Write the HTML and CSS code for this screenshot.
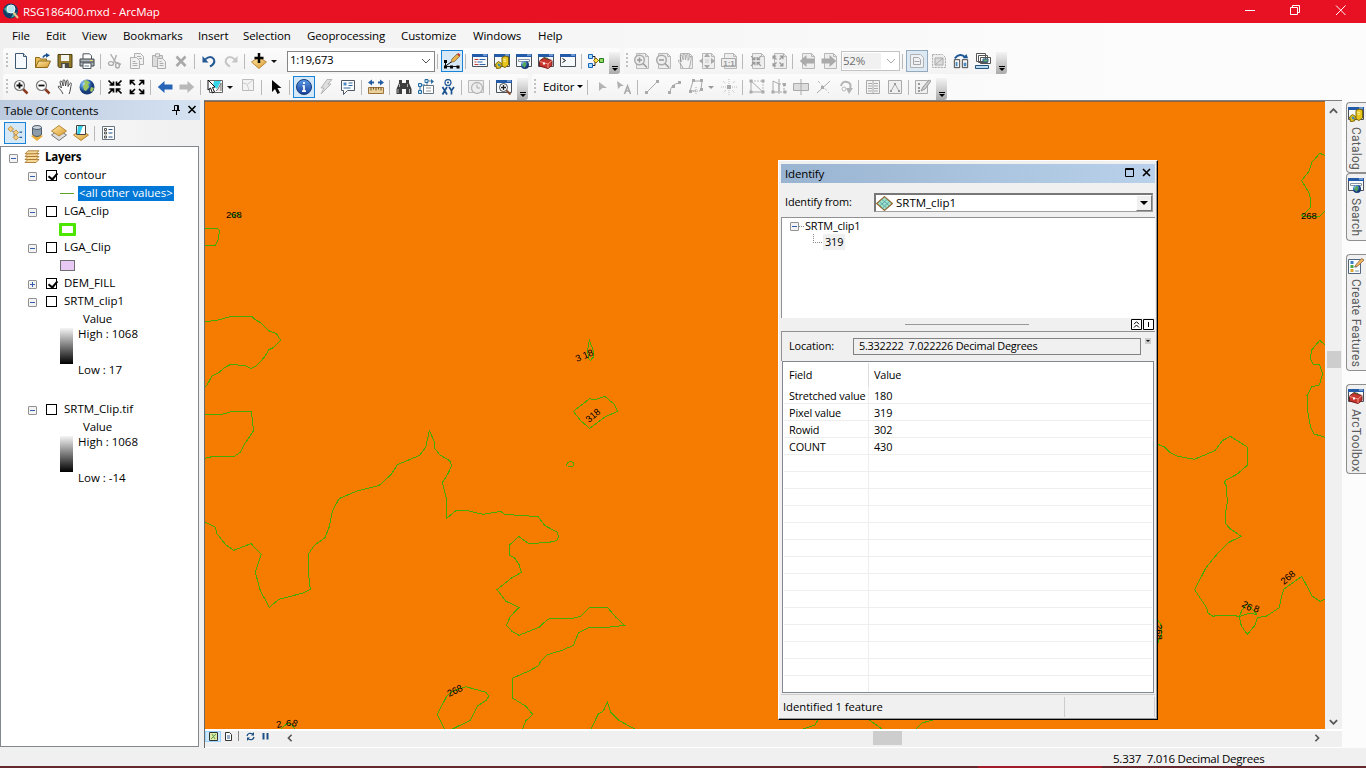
FILE: index.html
```html
<!DOCTYPE html>
<html lang="en">
<head>
<meta charset="utf-8">
<title>RSG186400.mxd - ArcMap</title>
<link rel="stylesheet" href="styles.css">
</head>
<body>
<svg class="sprite" aria-hidden="true">
<defs>
<linearGradient id="gold" x2="1" y2="1"><stop offset="0" stop-color="#ffe9a8"/><stop offset="1" stop-color="#d99a2b"/></linearGradient>
<linearGradient id="blue" x2="0" y2="1"><stop offset="0" stop-color="#5c9be8"/><stop offset="1" stop-color="#163f9a"/></linearGradient>
<radialGradient id="earth" cx=".35" cy=".3"><stop offset="0" stop-color="#bfe4ff"/><stop offset=".6" stop-color="#3f7fd0"/><stop offset="1" stop-color="#173a78"/></radialGradient>
</defs>
<symbol id="new" viewBox="0 0 16 16"><path d="M2.5.5h8l3 3v12h-11z" fill="#f6fafd" stroke="#3f5872"/><path d="M10.500.5v3h3" fill="#cfdfec" stroke="#3f5872"/></symbol>
<symbol id="open" viewBox="0 0 16 16"><path d="M.5 14.500v-10h4l1 1.500h6v2" fill="#e9bd56" stroke="#8d6a1b"/><path d="M.5 14.500l3-6.500h12l-3 6.500z" fill="url(#gold)" stroke="#8d6a1b"/><path d="M8 4.500q1-2.500 4-2.500" fill="none" stroke="#174f94" stroke-width="1.600"/><path d="M11 0l4 2.200-4 2.500z" fill="#174f94"/></symbol>
<symbol id="save" viewBox="0 0 16 16"><path d="M1 1.500h14v13H2.500L1 13.500z" fill="#92792b" stroke="#4b4015"/><path d="M4 2h8v6H4z" fill="#f3f3ef"/><path d="M4 10h8v5H4z" fill="#4d4a43"/><path d="M5.500 11h2.300v4H5.500z" fill="#eee"/></symbol>
<symbol id="print" viewBox="0 0 16 16"><path d="M4 6V.8h6.500l2 2V6" fill="#fff" stroke="#4b5560"/><path d="M1 6h14v7H1z" fill="#afb5b8" stroke="#3f464c"/><path d="M1 9h14" stroke="#3e4449"/><path d="M4 10h8v5.500H4z" fill="#fff" stroke="#4b5560"/><path d="M5.500 13h4.500" stroke="#5a7688"/><path d="M11 7.500h2.500" stroke="#f6d95c"/></symbol>
<symbol id="cut" viewBox="0 0 16 16"><g fill="none" stroke="#aeaeae" stroke-width="1.400"><path d="M3.500 1l5.500 9M9.500 2L6.500 10"/><ellipse cx="4" cy="10.500" rx="2.500" ry="1.900"/><ellipse cx="10.500" cy="12.500" rx="1.900" ry="2.500"/><path d="M9 9.500l5 2" stroke-width="1.800"/></g></symbol>
<symbol id="copy" viewBox="0 0 16 16"><g fill="#f1f1f1" stroke="#b0b0b0"><path d="M5.500.5h6l3 3v8h-9z"/><path d="M1.500 4.500h6l3 3v8h-9z"/><path d="M3.500 8.500h3m-3 2h5m-5 2h5M8 3.500h4m-2 2h3"/></g></symbol>
<symbol id="paste" viewBox="0 0 16 16"><g fill="#efefef" stroke="#adadad"><path d="M1.500 2.500h10v11h-10z" fill="#ddd"/><path d="M4.500.8h4v3h-4z"/><path d="M6.500 5.500h5l3 3v7h-8z"/><path d="M8.500 8.500h2m-2 2h4m-4 2h4"/></g></symbol>
<symbol id="del" viewBox="0 0 16 16"><path d="M3.500 3.500l9 9.500m0-9.500l-9 9.500" stroke="#a9a9a9" stroke-width="2.600"/></symbol>
<symbol id="undo" viewBox="0 0 16 16"><path d="M4 6.500q6-5 9 0q1.500 4-4 7" fill="none" stroke="#245993" stroke-width="2"/><path d="M1.500 3v6.500h6z" fill="#245993"/></symbol>
<symbol id="redo" viewBox="0 0 16 16"><path d="M12 6.500q-6-5-9 0q-1.500 4 4 7" fill="none" stroke="#c6c6c6" stroke-width="2"/><path d="M14.500 3v6.500h-6z" fill="#c6c6c6"/></symbol>
<symbol id="add" viewBox="0 0 16 16"><path d="M8 4l7.500 5L8 15.500.5 9z" fill="url(#gold)" stroke="#b98a3d"/><path d="M8 0v10M3.500 5h9" stroke="#050505" stroke-width="2.500"/></symbol>
<symbol id="edit" viewBox="0 0 18 16"><path d="M2.500 8.500v5h7l6 0M2.500 13L9 8.500" fill="none" stroke="#111"/><path d="M1 7h3v3H1zM1 12.500h3v3H1zM7 12.500h3v3H7zM13.500 12.500h3v3h-3z"/><path d="M8 9l1-3 5-5 2.500 2.500-5 5z" fill="#e8b34c" stroke="#76542c" stroke-width=".7"/><path d="M14 1l2.500 2.500 1-1.500L15.500 0z" fill="#c53a32"/></symbol>
<symbol id="win" viewBox="0 0 16 16"><path d="M.5 1.500h15v12H.5z" fill="#f6fafc" stroke="#4b5158"/><path d="M0 1h16v3H0z" fill="#235ba9"/><path d="M11 2h4" stroke="#b8d3f2"/></symbol>
<symbol id="toc" viewBox="0 0 16 16"><use href="#win"/><path d="M2.500 6.500h4m-4 2.500h2m-2 2.500h4" stroke="#c23b34"/><path d="M7.500 6.500h6m-8 2.500h5m-3 2.500h6" stroke="#3264a8"/></symbol>
<symbol id="catalog" viewBox="0 0 16 16"><use href="#win"/><path d="M8 4.500l3-1.500 3.500 1v8L11 14.500 8 13z" fill="#e8c51d" stroke="#7c6706"/><path d="M9 6l3 .5M9.500 8l2.500.4" stroke="#fff099"/><path d="M1.500 11l3-2.500 3 2-1 4.500-4 .5z" fill="#e8c51d" stroke="#7c6706"/><path d="M4 11l2 2" stroke="#338ac4" stroke-width="2"/></symbol>
<symbol id="search" viewBox="0 0 16 16"><use href="#win"/><path d="M2.500 6.500h11v2h-11z" fill="#fff" stroke="#8694a3"/><circle cx="9" cy="12" r="4" fill="url(#earth)"/><path d="M8 9q3 0 2 3t-2 3q0-2-2-3z" fill="#58a856"/></symbol>
<symbol id="toolbox" viewBox="0 0 16 16"><use href="#win"/><path d="M1.500 8l4-3 8.500 2.500v5L10 15.500 1.500 13z" fill="#c7372f" stroke="#761b18"/><path d="M1.500 8.500l8.500 2.500 4-3.500M10 11v4" fill="none" stroke="#f19b8e"/><path d="M6 6V4.500l4 1V7" fill="none" stroke="#552"/><path d="M5 9.500h2v2H5z" fill="#fff"/></symbol>
<symbol id="python" viewBox="0 0 16 16"><use href="#win"/><path d="M2.500 5.500l3 2-3 2" fill="none" stroke="#111"/></symbol>
<symbol id="model" viewBox="0 0 16 16"><path d="M4 3.500h3v4h5M4 12.500h3v-4" fill="none" stroke="#222"/><path d="M.5 1.500h4v4h-4zM.5 10.500h4v4h-4z" fill="#a9dfff" stroke="#1b63b6"/><path d="M8 5l2.500 2.500L8 10 5.500 7.500z" fill="#ffe04c" stroke="#8b6a00"/><path d="M11.500 5.500h4v4h-4z" fill="#90db65" stroke="#2c7a20"/></symbol>
<symbol id="page" viewBox="0 0 16 16"><path d="M3.500.5h9l3 3v12h-12z" fill="#eee" stroke="#b8b8b8"/><path d="M12.500.5v3h3" fill="none" stroke="#b8b8b8"/></symbol>
<symbol id="pzin" viewBox="0 0 16 16"><use href="#page"/><circle cx="6.500" cy="7" r="4.800" fill="#eee" stroke="#aaa" stroke-width="1.500"/><path d="M4 7h5M6.500 4.500v5M10 10.500l4 4" stroke="#999" stroke-width="1.500"/></symbol>
<symbol id="pzout" viewBox="0 0 16 16"><use href="#page"/><circle cx="6.500" cy="7" r="4.800" fill="#eee" stroke="#aaa" stroke-width="1.500"/><path d="M4 7h5M10 10.500l4 4" stroke="#999" stroke-width="1.500"/></symbol>
<symbol id="hand" viewBox="0 0 16 16"><path d="M6 15C5 12 2 9.500 1.200 8c0-1.500 1.800-1 3.300 1L3 3.200c0-1.700 1.500-1.500 2 0L6.200 7 6 1.800c.3-1.500 1.600-1.300 1.900 0L8.500 7l1-5c.4-1.300 1.700-1 1.600.4L11 7.500l1.800-3c.8-1.200 1.900-.5 1.500.8C13.500 8 13.500 12 12 15" fill="#fff" stroke="#4b4b4b"/></symbol>
<symbol id="phand" viewBox="0 0 16 16"><use href="#page"/><use href="#hand" opacity=".4"/></symbol>
<symbol id="pfull" viewBox="0 0 16 16"><use href="#page"/><path d="M8 0l3 4H5zm0 16l3-4H5zM0 8l4-3v6zm16 0l-4-3v6z" fill="#aaa"/><path d="M6 6h4v4H6z" fill="#ddd"/></symbol>
<symbol id="inward" viewBox="0 0 16 16"><path d="M1.500 1.500L6 6M2.500 6h4V2.500M14.500 1.500L10 6m3.500 0h-4V2.500M1.500 14.500L6 10m-3.500 0h4v3.500m8 1L10 10m3.500 0h-4v3.500" fill="none" stroke="currentColor" stroke-width="1.700"/></symbol>
<symbol id="outward" viewBox="0 0 16 16"><path d="M6 6L1.500 1.500m0 4v-4h4M10 6l4.500-4.500m-4 0h4v4M6 10l-4.500 4.500m0-4v4h4M10 10l4.500 4.500m-4 0h4v-4" fill="none" stroke="currentColor" stroke-width="1.700"/></symbol>
<symbol id="pin1" viewBox="0 0 16 16"><use href="#page"/><use href="#inward" color="#999" x="1" y="2" width="12" height="12"/></symbol>
<symbol id="pout" viewBox="0 0 16 16"><use href="#page"/><use href="#outward" color="#999" x="1" y="2" width="12" height="12"/></symbol>
<symbol id="left" viewBox="0 0 16 16"><path d="M.8 8L7.500 2v3.500h8v5h-8V14z" fill="currentColor"/></symbol>
<symbol id="right" viewBox="0 0 16 16"><path d="M15.200 8L8.500 2v3.500h-8v5h8V14z" fill="currentColor"/></symbol>
<symbol id="pleft" viewBox="0 0 16 16"><use href="#page"/><use href="#left" color="#aaa"/></symbol>
<symbol id="pright" viewBox="0 0 16 16"><use href="#page"/><use href="#right" color="#aaa"/></symbol>
<symbol id="draft" viewBox="0 0 16 16"><path d="M1.500 1.500h10l3 3v10h-13z" fill="#eef2f5" stroke="#aeb2b5"/><path d="M4.500 4.500h5l2 2v5h-7zM5.500 8.500h5" fill="none" stroke="#a7a7a7"/></symbol>
<symbol id="focus" viewBox="0 0 16 16"><path d="M1.500 1.500h10l3 3v10h-13z" fill="#eee" stroke="#aaa" stroke-dasharray="2 1"/><path d="M4 5h8v7H4zm0 7l8-7" fill="#ddd" stroke="#aaa"/></symbol>
<symbol id="layout" viewBox="0 0 18 16"><path d="M2 5Q8-2 14 4" fill="none" stroke="#1c5796" stroke-width="2.200"/><path d="M11 5h6l-2-5z" fill="#1c5796"/><path d="M1.500 6.500h6v9h-6zM10.500 6.500h6v9h-6z" fill="#f6f6f6" stroke="#333"/><path d="M3 9h2v5H3zM12 10h3v4h-3z" fill="#4a8ac2"/></symbol>
<symbol id="ddp" viewBox="0 0 16 16"><path d="M1.500.5h9v8h-9zM3.500 2.500h9v7h-9zM5.500 4.500h10v6h-10z" fill="#fff" stroke="#555"/><path d="M8 6h5v3H8z" fill="#65a96a" stroke="#315e8c"/><path d="M.5 12.500h13v3H.5z" fill="#b9dcf3" stroke="#26557c"/></symbol>
<symbol id="zin" viewBox="0 0 16 16"><path d="M10 10l4.500 4.500" stroke="#8b3a22" stroke-width="2.500"/><circle cx="6.500" cy="6.500" r="5" fill="#fff" stroke="#777" stroke-width="1.200"/><path d="M3.500 6.500h6m-3-3v6" stroke="#111" stroke-width="1.800"/></symbol>
<symbol id="zout" viewBox="0 0 16 16"><path d="M10 10l4.500 4.500" stroke="#8b3a22" stroke-width="2.500"/><circle cx="6.500" cy="6.500" r="5" fill="#fff" stroke="#777" stroke-width="1.200"/><path d="M3.500 6.500h6" stroke="#111" stroke-width="1.800"/></symbol>
<symbol id="globe" viewBox="0 0 16 16"><circle cx="8" cy="8" r="7.500" fill="url(#earth)"/><path d="M5 1q4 0 6 3l-2 1 1 3-3 4-2-1-1-4 2-2zM12 8l3 1-2 4-2-1z" fill="#9fc65a"/></symbol>
<symbol id="selfeat" viewBox="0 0 16 16"><path d="M2.500 1.500h13v12h-13z" fill="#fff" stroke="#666"/><path d="M7 2h7l-4 8-4-3z" fill="#36d5e9"/><path d="M9 12l2-2 3-6v8" fill="#edd" stroke="#777"/><path d="M1 1l7 7-2.500.5L7.500 13l-2 1-2-5L1 11z" fill="#fff" stroke="#111"/></symbol>
<symbol id="clear" viewBox="0 0 16 16"><path d="M2.500.5h11v11h-11z" fill="#f3f3f3" stroke="#bbb"/><path d="M3 4l4 1 2 6M8 5l5-4" fill="none" stroke="#ccc"/></symbol>
<symbol id="arrow" viewBox="0 0 16 16"><path d="M4 1v12l3-3 2.500 5 2.500-1.200-2.500-4.700h4z" fill="#080808"/></symbol>
<symbol id="info" viewBox="0 0 16 16"><circle cx="8" cy="8" r="7.500" fill="url(#blue)" stroke="#173c7c"/><path d="M8 3v2M6.500 7H8v5M6 12.200h4" fill="none" stroke="#fff" stroke-width="1.700"/></symbol>
<symbol id="flash" viewBox="0 0 16 16"><path d="M9 0.500h5l-4 4.500h3L3 15l3-6H3z" fill="#ddd" stroke="#b5b5b5"/></symbol>
<symbol id="popup" viewBox="0 0 16 16"><path d="M1.500 1.500h13v10h-7l-4 4v-4h-2z" fill="#fff" stroke="#4e5965"/><path d="M3.500 3.500h3v3h-3z" fill="#4d8dca"/><path d="M8.500 4h4m-4 2.500h4m-9 2.500h7" stroke="#2f659e"/></symbol>
<symbol id="measure" viewBox="0 0 16 16"><path d="M0 3.500l4-3v2h2v2H4v2zM16 3.500l-4-3v2h-2v2h2v2z" fill="#245da0"/><path d="M.5 8.500h15v6H.5z" fill="#ead19a" stroke="#9b723b"/><path d="M3 8.500v3m2.500-3v2m2.500-2v3m2.500-3v2m2.500-2v3" stroke="#6d4e25"/></symbol>
<symbol id="binoc" viewBox="0 0 16 16"><path d="M3 1h3v3h4V1h3v3l2.500 6v5H10v-5H6v5H.5v-5L3 4z" fill="#3d3d3d"/><path d="M2 10v4m1.500-9v3m8-3v3m2 2v4" stroke="#aaa"/></symbol>
<symbol id="route" viewBox="0 0 16 16"><path d="M5.500 6.500h10v8h-10zM9 6V2h4" fill="#fff" stroke="#66747f"/><path d="M2 13V6h5" fill="none" stroke="#2b73a8"/><path d="M.5 11.500h3v3h-3zM.5 4.500h3v3h-3zM7 .5h3v3H7z" fill="#bde2fa" stroke="#276b9d"/><path d="M13 0v5l3-2.500z" fill="#276b9d"/><path d="M8 9h5m-5 3h5" stroke="#999"/></symbol>
<symbol id="gotoxy" viewBox="0 0 16 16"><circle cx="8" cy="3.500" r="3" fill="#fff" stroke="#245b96" stroke-width="1.300"/><circle cx="8" cy="3.500" r="1.100" fill="#245b96"/><path d="M2.500 8l4.500 7.500M7 8l-4.500 7.500M9 8l2.500 3.500L14 8m-2.500 3v4.500" fill="none" stroke="#1b518c" stroke-width="1.700"/></symbol>
<symbol id="time" viewBox="0 0 16 16"><path d="M.5 1.500h15v12H.5z" fill="#eee" stroke="#bbb"/><circle cx="9" cy="9" r="5.500" fill="#eee" stroke="#b5b5b5" stroke-width="1.300"/><path d="M9 5.500V9h3" fill="none" stroke="#aaa"/></symbol>
<symbol id="viewer" viewBox="0 0 16 16"><use href="#win"/><path d="M10 11l4.500 4.500" stroke="#8b4a32" stroke-width="2"/><circle cx="7.500" cy="8.500" r="4" fill="#fff" stroke="#444"/><path d="M5 8.500h5M7.500 6v5" stroke="#222" stroke-width="1.300"/></symbol>
<symbol id="gray-arrow" viewBox="0 0 16 16"><path d="M5 3l8 6H8.500L5 12z" fill="#b4b4b4"/></symbol>
<symbol id="arrowa" viewBox="0 0 16 16"><path d="M1 2l7 5H5l-3 3z" fill="#b0b0b0"/><path d="M8.500 15l3-8 3 8m-5-3h4" fill="none" stroke="#aaa" stroke-width="1.600"/></symbol>
<symbol id="line" viewBox="0 0 16 16"><path d="M3 13L13 3" stroke="#aaa"/><path d="M1 12h3v3H1zM12 1h3v3h-3z" fill="#aaa"/></symbol>
<symbol id="arc" viewBox="0 0 16 16"><path d="M4 13q1-8 9-9" fill="none" stroke="#aaa"/><path d="M2 12h3v3H2zM6 6h3v3H6zM12 2h3v3h-3z" fill="#aaa"/></symbol>
<symbol id="trace" viewBox="0 0 16 16"><path d="M5 2h9l-1 8M5 2L2 12h6" fill="none" stroke="#aaa"/><path d="M4 0h3v3H4zM12 0h3v3h-3zM1 11h3v3H1zM12 9h3v3h-3z" fill="#aaa"/><path d="M8 8v7m-3-3h7" stroke="#aaa" stroke-dasharray="1 1"/></symbol>
<symbol id="point" viewBox="0 0 16 16"><path d="M8 0v5m0 6v5M0 8h5m6 0h5M2 2l3 3m6 6l3 3m0-12l-3 3m-6 6l-3 3" stroke="#bbb" stroke-dasharray="1 1"/><path d="M6 6h4v4H6z" fill="#aaa"/></symbol>
<symbol id="vertices" viewBox="0 0 16 16"><path d="M2 13V2l12 11z" fill="none" stroke="#aaa"/><path d="M2 2h12v11" fill="none" stroke="#bbb" stroke-dasharray="2 1"/><path d="M.5.5h3v3h-3zM.5 11.500h3v3h-3zM12.500 11.500h3v3h-3zM12.500.5h3v3h-3z" fill="#aaa"/></symbol>
<symbol id="reshape" viewBox="0 0 16 16"><path d="M2 13V2l6 3v8zM8 0v15" fill="none" stroke="#aaa"/><path d="M8 5h5v8H8" fill="none" stroke="#aaa" stroke-dasharray="2 1"/><path d="M.5 11.500h3v3h-3zM12.500 11.500h3v3h-3zM12 4h3v3h-3z" fill="#aaa"/></symbol>
<symbol id="cutpoly" viewBox="0 0 16 16"><path d="M.5 4.500h15v7H.5z" fill="#ddd" stroke="#aaa"/><path d="M8 0v16" stroke="#aaa"/></symbol>
<symbol id="split" viewBox="0 0 16 16"><path d="M2 14L15 2" stroke="#aaa"/><path d="M3 2l11 12" stroke="#bbb" stroke-dasharray="3 2"/><path d="M6 7h3v3H6z" fill="#aaa"/></symbol>
<symbol id="rotate" viewBox="0 0 16 16"><path d="M4 7q1-5 6-4t3 7" fill="none" stroke="#b4b4b4" stroke-width="2"/><path d="M9 9h7l-4 6z" fill="#b4b4b4"/><circle cx="7" cy="10" r="2" fill="none" stroke="#bbb"/></symbol>
<symbol id="attrs" viewBox="0 0 16 16"><path d="M1.500 1.500h13v13h-13zM8 2v12" fill="#f2f2f2" stroke="#aaa"/><path d="M3 4.500h4m2 0h4m-10 2.500h4m2 0h4m-10 2.500h4m2 0h4m-10 2.500h4m2 0h4" stroke="#aaa"/></symbol>
<symbol id="sketch" viewBox="0 0 16 16"><path d="M1.500 1.500h13v13h-13zM4 12l4-7 4 7" fill="#f0f0f0" stroke="#aaa"/><path d="M3 11h2v2H3zM7 4h2v2H7zM11 11h2v2h-2z" fill="#999"/></symbol>
<symbol id="create-gray" viewBox="0 0 16 16"><path d="M.5 1.500h12v13H.5z" fill="#f0f0f0" stroke="#aaa"/><path d="M3 4h2v2H3zM3 8h2v2H3zM3 11h2v2H3z" fill="#999"/><path d="M6 12l2-4 6-7 2 1-6 8z" fill="#ccc" stroke="#999"/></symbol>
<symbol id="create" viewBox="0 0 16 16"><path d="M.5 1.500h12v14H.5z" fill="#f8fbff" stroke="#52677d"/><path d="M2.500 3h3v3h-3z" fill="#3b7cc2"/><path d="M2.500 7h3v3h-3z" fill="#47a549"/><path d="M2.500 11h3v3h-3z" fill="#e1a531"/><path d="M7 13h4M7 9h2" stroke="#7b92a5"/><path d="M6.500 9l2-3 5-5.500L16 2l-6 6z" fill="#efb35b" stroke="#7e5637" stroke-width=".7"/></symbol>
<symbol id="layers" viewBox="0 0 16 14"><g fill="#f6d796" stroke="#a97b35" stroke-width=".9"><path d="M1 12.500l3-3h11l-3 3zM1 9.500l3-3h11l-3 3zM1 6.500l3-3h11l-3 3z"/><path d="M1 3.800l3-3h11l-3 3z"/></g></symbol>
<symbol id="drawlist" viewBox="0 0 18 16"><path d="M3 4l5 3v6h3M8 7l3 0" fill="none" stroke="#777"/><path d="M1 3.500L4 .5l3.500 3-3.500 3zM7 7.500l3-3 3 3-3 3zM7 13l3-3 3 3-3 3z" fill="#f2cd83" stroke="#c08b36"/><path d="M14 7h3m-3 6h3" stroke="#235b98" stroke-width="1.500"/></symbol>
<symbol id="source" viewBox="0 0 16 16"><path d="M2 11l6-3 6 3-6 5z" fill="#e9ae39"/><path d="M3.500 2.500v7q4.500 4 9 0v-7" fill="#8d9cab" stroke="#4b5b6b"/><ellipse cx="8" cy="2.500" rx="4.500" ry="2" fill="#ccd5dd" stroke="#4b5b6b"/></symbol>
<symbol id="visible" viewBox="0 0 16 16"><path d="M8 5l7.500 5L8 15.500.5 10z" fill="#ddd" stroke="#777"/><path d="M8 .5L15.500 6 8 11 .5 6z" fill="url(#gold)" stroke="#b88634"/></symbol>
<symbol id="bysel" viewBox="0 0 16 16"><path d="M8 5l7.500 5L8 15.500.5 10z" fill="url(#gold)" stroke="#b88634"/><path d="M3.500.5h9v9h-9z" fill="#fff" stroke="#444"/><path d="M5 1h5l-2 5-1 3H4z" fill="#36cce5"/></symbol>
<symbol id="options" viewBox="0 0 16 16"><path d="M1.500 1.500h12v13h-12z" fill="#fff" stroke="#65727f"/><path d="M3.500 3.500h2v2h-2zM3.500 7h2v2h-2zM3.500 11h2v2h-2z" fill="none" stroke="#555"/><path d="M7.500 4.500h4m-4 3.500h4m-4 4h4" stroke="#234f84"/></symbol>
<symbol id="grid" viewBox="0 0 18 16"><path d="M9 .7L17.300 8 9 15.300.7 8z" fill="#9fe1c9" stroke="#93672d" stroke-width="1.300"/><path d="M6 3.500l8 7M3.500 5.700l8 7.300M12 3.500l-8 7m10.500-5L6.700 13" stroke="#438fa0" stroke-width=".7"/></symbol>
</svg>

<header class="titlebar">
  <svg class="logo" viewBox="0 0 16 16"><circle cx="7.500" cy="8" r="7.500" fill="#123e6c"/><path d="M1 6l4-4 2 4-2 5zM10 11l4-2-2 4-4 2z" fill="#47a89a"/><path d="M10 9l5 6" stroke="#e6c48c" stroke-width="2"/><circle cx="8" cy="6" r="4" fill="#b8e4ef" stroke="#e9f4f7"/></svg>
  <span class="title">RSG186400.mxd - ArcMap</span>
  <svg class="winbtns" viewBox="0 0 110 23"><g fill="none" stroke="#fff"><path d="M5 10.500h10M50.500 7.500h7v7h-7zM52.500 7V5.500h7v7h-2M96 5.500l9.500 9.500m0-9.500L96 15"/></g></svg>
</header>

<nav class="menu"><span class="m1">File</span><span class="m2">Edit</span><span class="m3">View</span><span class="m4">Bookmarks</span><span class="m5">Insert</span><span class="m6">Selection</span><span class="m7">Geoprocessing</span><span class="m8">Customize</span><span class="m9">Windows</span><span>Help</span></nav>

<div class="bars">
  <div class="toolbar first"><i class="grip"></i>
    <b><svg><use href="#new"/></svg></b><b><svg><use href="#open"/></svg></b><b><svg><use href="#save"/></svg></b><b><svg><use href="#print"/></svg></b><i class="sep"></i>
    <b><svg><use href="#cut"/></svg></b><b><svg><use href="#copy"/></svg></b><b><svg><use href="#paste"/></svg></b><b><svg><use href="#del"/></svg></b><i class="sep"></i>
    <b><svg><use href="#undo"/></svg></b><b><svg><use href="#redo"/></svg></b><i class="sep"></i><b><svg><use href="#add"/></svg></b><i class="caret"></i>
    <div class="combo scale"><span>1:19,673</span><svg viewBox="0 0 10 6"><path d="M1 1l4 4 4-4" fill="none" stroke="#555"/></svg></div><i class="sep"></i>
    <b class="on"><svg><use href="#edit"/></svg></b><i class="sep"></i>
    <b><svg><use href="#toc"/></svg></b><b><svg><use href="#catalog"/></svg></b><b><svg><use href="#search"/></svg></b><b><svg><use href="#toolbox"/></svg></b><b><svg><use href="#python"/></svg></b><i class="sep"></i><b><svg><use href="#model"/></svg></b><i class="cap"></i>
  </div>
  <div class="toolbar"><i class="grip"></i>
    <b><svg><use href="#pzin"/></svg></b><b><svg><use href="#pzout"/></svg></b><b><svg><use href="#phand"/></svg></b><b><svg><use href="#pfull"/></svg></b><b><svg viewBox="0 0 16 16"><use href="#page"/><path d="M.5 5.500h14v8H.5z" fill="#eee" stroke="#aaa"/><text x="2.300" y="12.500" class="one">1:1</text></svg></b><i class="sep"></i>
    <b><svg><use href="#pin1"/></svg></b><b><svg><use href="#pout"/></svg></b><i class="sep"></i><b><svg><use href="#pleft"/></svg></b><b><svg><use href="#pright"/></svg></b>
    <div class="combo pct"><span>52%</span><svg viewBox="0 0 10 6"><path d="M1 1l4 4 4-4" fill="none" stroke="#aaa"/></svg></div><i class="sep"></i>
    <b class="on muted"><svg><use href="#draft"/></svg></b><b><svg><use href="#focus"/></svg></b><b><svg><use href="#layout"/></svg></b><b><svg><use href="#ddp"/></svg></b><i class="cap"></i>
  </div>
</div>
<div class="bars">
  <div class="toolbar first"><i class="grip"></i>
    <b><svg><use href="#zin"/></svg></b><b><svg><use href="#zout"/></svg></b><b><svg><use href="#hand"/></svg></b><b><svg><use href="#globe"/></svg></b><i class="sep"></i>
    <b><svg><use href="#inward"/></svg></b><b><svg><use href="#outward"/></svg></b><i class="sep"></i><b class="navy"><svg><use href="#left"/></svg></b><b class="gray"><svg><use href="#right"/></svg></b><i class="sep"></i>
    <b><svg><use href="#selfeat"/></svg></b><i class="caret"></i><b><svg><use href="#clear"/></svg></b><i class="sep"></i><b><svg><use href="#arrow"/></svg></b><i class="sep"></i>
    <b class="on"><svg><use href="#info"/></svg></b><b><svg><use href="#flash"/></svg></b><b><svg><use href="#popup"/></svg></b><i class="sep"></i><b><svg><use href="#measure"/></svg></b><i class="sep"></i>
    <b><svg><use href="#binoc"/></svg></b><b><svg><use href="#route"/></svg></b><b><svg><use href="#gotoxy"/></svg></b><i class="sep"></i><b><svg><use href="#time"/></svg></b><i class="sep"></i><b><svg><use href="#viewer"/></svg></b><i class="cap"></i>
  </div>
  <div class="toolbar"><i class="grip"></i><span class="editor">Editor</span><i class="sep"></i>
    <b><svg><use href="#gray-arrow"/></svg></b><b><svg><use href="#arrowa"/></svg></b><i class="sep"></i><b><svg><use href="#line"/></svg></b><b><svg><use href="#arc"/></svg></b><b><svg><use href="#trace"/></svg></b><i class="caret dim"></i><b><svg><use href="#point"/></svg></b><i class="sep"></i>
    <b><svg><use href="#vertices"/></svg></b><b><svg><use href="#reshape"/></svg></b><b><svg><use href="#cutpoly"/></svg></b><b><svg><use href="#split"/></svg></b><b><svg><use href="#rotate"/></svg></b><i class="sep"></i><b><svg><use href="#attrs"/></svg></b><b><svg><use href="#sketch"/></svg></b><i class="sep"></i><b><svg><use href="#create-gray"/></svg></b><i class="cap"></i>
  </div>
</div>

<main class="work">
  <aside class="contents">
    <div class="panel-title"><span>Table Of Contents</span><svg viewBox="0 0 30 12"><path d="M6.500 1.500h4v5h-4zM4 6.500h8M8.500 7v4" fill="none" stroke="#000"/><path d="M9.500 1v6" stroke="#000"/><path d="M20.500 2l7 7m0-7l-7 7" stroke="#000" stroke-width="1.600"/></svg></div>
    <div class="panel-tools"><b class="on"><svg><use href="#drawlist"/></svg></b><b><svg><use href="#source"/></svg></b><b><svg><use href="#visible"/></svg></b><b><svg><use href="#bysel"/></svg></b><i class="sep"></i><b><svg><use href="#options"/></svg></b></div>
    <div class="tree">
      <div class="row root"><i class="exp"></i><svg class="lay"><use href="#layers"/></svg><strong>Layers</strong></div>
      <div class="row"><i class="exp"></i><i class="check yes"></i><span>contour</span></div>
      <div class="row"><i class="sym-line"></i><span class="selected">&lt;all other values&gt;</span></div>
      <div class="row"><i class="exp"></i><i class="check"></i><span>LGA_clip</span></div>
      <div class="row"><i class="sym-green"></i></div>
      <div class="row"><i class="exp"></i><i class="check"></i><span>LGA_Clip</span></div>
      <div class="row"><i class="sym-lilac"></i></div>
      <div class="row"><i class="exp plus"></i><i class="check yes"></i><span>DEM_FILL</span></div>
      <div class="row"><i class="exp"></i><i class="check"></i><span>SRTM_clip1</span></div>
      <div class="row value">Value</div>
      <div class="ramp"><i></i><div><span>High : 1068</span><span>Low : 17</span></div></div>
      <div class="row"><i class="exp"></i><i class="check"></i><span>SRTM_Clip.tif</span></div>
      <div class="row value">Value</div>
      <div class="ramp"><i></i><div><span>High : 1068</span><span>Low : -14</span></div></div>
    </div>
  </aside>

  <section class="view">
    <div class="canvas-row">
      <svg class="map" viewBox="205 102 1120 627">
        <g class="contour">
          <g transform="translate(200 190) scale(.33333)">
            <path d="M15 115H50L59 121 56 137V147L46 166H15M15 395L50 391 95 379H155L165 389 182 398 209 424 229 430 242 451 222 472 207 479 192 503 169 527 153 536 135 526 90 524 72 534 55 549 36 558 20 587 15 590M15 674H62L95 665H155L157 694 161 722 135 760 121 787 101 800H36L15 805"/>
            <path d="M1168 451L1163 480 1165 505 1171 512 1181 500 1179 480zM1120 664L1169 626 1184 629 1214 619 1243 643 1253 664 1216 680 1169 715 1142 692zM1098 827L1104 817 1112 813 1120 818V827L1115 831 1104 829M92 68L100 82 112 68 122 82"/>
          </g>
          <g transform="translate(200 430) scale(.33333)">
            <path d="M15 276L46 291 50 310 76 343 101 361 153 341 184 373 166 427 181 482 208 532 236 508 310 489 331 478 326 435 325 373 343 346 375 323 388 290 397 244 417 206 471 183 538 166 574 133 592 104 659 76 677 52 688 2 703 35 704 55 719 74 749 92 755 107 743 133 727 158 739 206 740 265 769 241H797L850 253 902 244 914 253 1014 260 1035 287 1073 307 1075 321 1070 332 1047 337 986 341 956 319 928 346V375L943 383 957 403 964 427 936 443 891 479 918 514 957 532 931 560 919 586 936 604 957 616 1017 592 1043 568 1052 565H1118L1142 559 1169 532H1222L1248 562 1274 586 1222 592H1169L1136 608 1120 646 1089 660 1043 674 1021 695 1016 707 989 722 937 745V804L977 828 998 853 977 873 967 898"/>
            <path d="M734 898L712 853 740 799 756 785 797 770 858 787 866 799 860 810 833 828 811 871 755 898M1173 898L1194 853 1210 843 1222 817 1233 848 1256 871 1306 898M243 896L262 880 274 883 284 896"/>
          </g>
          <path d="M803 729L815 725 819 718M868 719L882 729M916 729L922 723 936 719"/>
          <g transform="translate(1150 0) scale(.33333)"><path d="M530 468L509 460 485 488 478 512 455 542 478 580 482 600V622L455 648 508 650 528 631M530 1039L509 1021 485 1050 481 1075 490 1093H508L518 1122 508 1155 485 1160 471 1187 474 1240 482 1282 492 1302 530 1313"/></g>
          <g transform="translate(1140 420) scale(.33333)"><path d="M50 72L72 80 92 99 110 108 163 118 225 92 247 62 271 49 322 81V136L292 162 258 180 253 187 259 198 262 248 256 280V310L270 326 304 349 268 366 233 400 198 443 164 509 200 563 204 579 219 589 233 586 285 587 298 590 304 618 322 643 345 616 352 593 380 588 418 563 423 537 431 508 485 469 517 529 540 544 558 536M298 590L306 570 322 550 345 577 350 583 327 580zM53 600L62 612 66 640 53 670"/></g>
        </g>
        <g class="labels">
          <text x="226" y="218">268</text><text x="1301" y="219">268</text>
          <text transform="translate(577 362) rotate(-22)">3 18</text>
          <text transform="translate(589 423) rotate(-40)">318</text>
          <text transform="translate(449 697) rotate(-25)">268</text>
          <text transform="translate(277 728) rotate(-12)">2</text><text x="286" y="726">6</text><text transform="translate(291 725) rotate(25)">8</text>
          <text transform="translate(1284 585) rotate(-40)">268</text>
          <text transform="translate(1241 606) rotate(30)">26</text><text transform="translate(1253 611) rotate(20)">8</text>
          <text transform="translate(1156 624) rotate(90)">268</text>
        </g>
      </svg>
      <div class="vscroll"><svg viewBox="0 0 10 6"><path d="M1 5l4-4 4 4" fill="none" stroke="#555" stroke-width="2"/></svg><i></i><svg viewBox="0 0 10 6"><path d="M1 1l4 4 4-4" fill="none" stroke="#555" stroke-width="2"/></svg></div>
    </div>
    <div class="hscroll">
      <span class="viewtab on"><svg viewBox="0 0 9 9"><path d="M.5.500h8v8h-8z" fill="#dceca5" stroke="#333"/><path d="M2 7l5-5M3 2l3 5" stroke="#5b9650"/></svg></span>
      <span class="viewtab"><svg viewBox="0 0 9 9"><path d="M1.500.5h4l2 2v6h-6z" fill="#fff" stroke="#333"/><path d="M3 4h3m-3 2h3" stroke="#2f609a"/></svg></span><i></i>
      <span class="viewtab refresh"><svg viewBox="0 0 9 9"><path d="M1 4q1-4 6-2M8 5q-1 4-6 2" fill="none" stroke="#1d4f84" stroke-width="1.300"/><path d="M8 0v3.500H5zM1 9V5.500h3z" fill="#1d4f84"/></svg></span>
      <span class="viewtab pause"><svg viewBox="0 0 9 9"><path d="M2.500 1v6.500M6.500 1v6.500" stroke="#1d4f84" stroke-width="2"/></svg></span>
      <svg class="hl" viewBox="0 0 6 10"><path d="M5 1L1 5l4 4" fill="none" stroke="#555" stroke-width="2"/></svg><em></em><svg class="hr" viewBox="0 0 6 10"><path d="M1 1l4 4-4 4" fill="none" stroke="#555" stroke-width="2"/></svg>
    </div>
  </section>

  <aside class="dock">
    <div class="tab t1"><svg><use href="#catalog"/></svg><span>Catalog</span></div>
    <div class="tab t2"><svg><use href="#search"/></svg><span>Search</span></div>
    <div class="tab t3"><svg><use href="#create"/></svg><span>Create Features</span></div>
    <div class="tab t4"><svg><use href="#toolbox"/></svg><span>ArcToolbox</span></div>
  </aside>
</main>
<footer class="status"><span>5.337&nbsp; 7.016 Decimal Degrees</span></footer>
<div class="edge"><i></i></div>

<section class="identify">
  <div class="id-title"><span>Identify</span><svg viewBox="0 0 28 12"><path d="M1.500 1.500h8v8h-8zM1 2.500h9" fill="none" stroke="#000"/><path d="M19 2l7 7m0-7l-7 7" stroke="#000" stroke-width="1.600"/></svg></div>
  <div class="from"><span>Identify from:</span><div class="select"><svg><use href="#grid"/></svg><span>SRTM_clip1</span><b></b></div></div>
  <div class="results"><div><i class="exp"></i><u></u><span>SRTM_clip1</span></div><div class="child"><u></u><span>319</span></div></div>
  <div class="splitter"><i></i><svg viewBox="0 0 23 11"><path d="M.5.500h10v10H.5zM12.500.5h10v10h-10z" fill="#fff" stroke="#000"/><path d="M3 5.200l2.500-2.500L8 5.200M3 8.500L5.500 6 8 8.500M17.500 3v5" fill="none" stroke="#000"/></svg></div>
  <div class="location"><span>Location:</span><div>5.332222&nbsp; 7.022226 Decimal Degrees</div><b></b></div>
  <div class="table">
    <div class="head"><span>Field</span><span>Value</span></div>
    <div><span>Stretched value</span><span>180</span></div><div><span>Pixel value</span><span>319</span></div><div><span>Rowid</span><span>302</span></div><div><span>COUNT</span><span>430</span></div>
    <div><span></span></div><div><span></span></div><div><span></span></div><div><span></span></div><div><span></span></div><div><span></span></div><div><span></span></div><div><span></span></div><div><span></span></div><div><span></span></div><div><span></span></div><div><span></span></div><div><span></span></div><div class="last"><span></span></div>
  </div>
  <div class="id-status"><span>Identified 1 feature</span><i></i></div>
</section>
</body>
</html>
```
FILE: styles.css
```css
* { box-sizing: border-box; }
body { margin: 0; width: 1366px; height: 768px; overflow: hidden; display: flex; flex-direction: column; position: relative; background: linear-gradient(90deg, #f0f0f0, #fcfcfc 85%); font: 11.5px/16px "Open Sans", "Noto Sans", sans-serif; color: #000; letter-spacing: -.1px; }
i, em { font-style: normal; display: block; flex: none; }
svg { display: block; flex: none; }
.sprite { position: absolute; width: 0; height: 0; }
.titlebar { height: 23px; flex: none; background: #e81123; color: #fff; display: flex; padding-left: 3px; }
.logo { width: 16px; height: 16px; margin-top: 3px; }
.title { margin: 4px 0 0 4px; flex: 1; white-space: nowrap; }
.winbtns { width: 110px; height: 23px; margin-right: 16px; }
.menu { height: 25px; flex: none; display: flex; padding: 5px 0 0 12px; white-space: nowrap; }
.menu span { flex: none; }
.m1 { width: 34px; } .m2 { width: 36px; } .m3 { width: 41px; } .m4 { width: 75px; } .m5 { width: 45px; }
.m6 { width: 64px; } .m7 { width: 94px; } .m8 { width: 72px; } .m9 { width: 65px; }

.bars { height: 26px; flex: none; display: flex; }
.toolbar { height: 26px; display: flex; align-items: center; background: linear-gradient(#fcfcfc, #f3f3f3); border-radius: 3px; margin-left: 4px; }
.toolbar.first { margin-left: 3px; }
.toolbar b, .panel-tools b { width: 22px; height: 22px; flex: none; display: flex; align-items: center; justify-content: center; font-weight: 400; }
.toolbar b svg, .panel-tools b svg { width: 16px; height: 16px; }
.toolbar b.on svg { width: 18px; height: 16px; }
.toolbar b.on, .panel-tools b.on { background: #d5e8f8; border: 1px solid #1883d7; }
.toolbar b.muted { background: #dce9f3; border-color: #93a9bd; }
.one { font: 700 8px "Liberation Sans", Arial, sans-serif; fill: #999; }
.navy { color: #2664b8; }
.gray { color: #b8b8b8; }
.grip { width: 2px; height: 16px; margin: 0 2px; background: repeating-linear-gradient(#c0c0c0 0 2px, transparent 2px 4px); }
.toolbar.first .grip { margin-left: 3px; }
.sep { width: 6px; height: 15px; background: linear-gradient(#b9b9b9, #b9b9b9) 2px 0 / 1px 100% no-repeat; }
.caret { width: 11px; height: 3px; }
.caret::after { content: ""; display: block; margin-left: 1px; width: 0; border: 3px solid transparent; border-top-color: #111; border-bottom: 0; }
.caret.dim::after { border-top-color: #999; }
.cap { width: 11px; height: 22px; margin: 4px 0 0 2px; background: linear-gradient(#f4f4f4, #aaa); border-radius: 0 0 3px 0; display: flex; flex-direction: column; justify-content: flex-end; align-items: center; padding-bottom: 3px; gap: 1px; }
.cap::before { content: ""; width: 6px; height: 1px; background: #000; }
.cap::after { content: ""; border: 3px solid transparent; border-top-color: #000; border-bottom: 0; }
.combo { display: flex; align-items: center; background: #fff; border: 1px solid #868686; height: 21px; }
.combo span { flex: 1; padding: 0 0 2px 2px; letter-spacing: -.25px; }
.combo svg { width: 10px; height: 6px; margin-right: 3px; }
.scale { width: 148px; margin-left: 6px; }
.pct { width: 59px; height: 20px; margin-left: 1px; color: #6d6d6d; border-color: #c3c3c3; }
.pct span { flex: none; width: 38px; background: #f1f1f1; margin: 0 5px 0 1px; padding: 0; }
.editor { width: 47px; padding-left: 5px; white-space: nowrap; }
.editor::after { content: ""; display: inline-block; border: 3px solid transparent; border-top-color: #000; border-bottom: 0; margin: 0 0 3px 3px; }

.work { flex: none; height: 648px; display: flex; }
.contents { width: 204px; flex: none; background: #f0f0f0; }
.panel-title { width: 200px; height: 20px; padding: 3px 2px 0 4px; display: flex; justify-content: space-between; background: linear-gradient(90deg, #bccbdf, #d5e2f2); letter-spacing: -.12px; }
.panel-title svg { width: 30px; height: 12px; margin-top: 1px; }
.panel-tools { height: 26px; display: flex; align-items: center; padding-left: 4px; width: 200px; background: linear-gradient(90deg, #fafafa, #f0f0f0); }
.tree { width: 199px; height: 601px; background: #fff; border: 1px solid #828790; padding-top: 1px; }
.row { height: 18px; display: flex; align-items: center; padding-left: 27px; }
.root { padding-left: 8px; }
.exp { width: 9px; height: 9px; border: 1px solid #919191; border-radius: 1px; background: linear-gradient(#365fb0, #365fb0) 1px 3px / 5px 1px no-repeat, #f3f3f3; margin-top: 2px; }
.exp.plus { background: linear-gradient(#365fb0, #365fb0) 1px 3px / 5px 1px no-repeat, linear-gradient(#365fb0, #365fb0) 3px 1px / 1px 5px no-repeat, #f3f3f3; }
.lay { width: 16px; height: 14px; margin: 0 5px 0 6px; }
.root strong { letter-spacing: -.25px; }
.check { width: 11px; height: 11px; border: 1px solid #000; margin: 1px 8px 0 9px; }
.row .check + span { margin-left: -1px; letter-spacing: 0; }
.check.yes::after { content: ""; display: block; width: 4px; height: 7px; border: solid #000; border-width: 0 2px 2px 0; transform: translate(3px, 0) rotate(40deg); }
.sym-line { width: 14px; height: 1px; background: #5da324; margin: 0 4px 0 32px; }
.selected { background: #0078d7; color: #fff; height: 15px; line-height: 14px; width: 96px; padding-left: 1px; white-space: nowrap; letter-spacing: -.05px; }
.sym-green { width: 17px; height: 13px; margin: 0 0 0 31px; border: 3px solid #4ce600; border-radius: 1px; }
.sym-lilac { width: 15px; height: 11px; margin-left: 32px; border: 1px solid #6e6e6e; background: #e8c8f5; }
.value { padding-left: 82px; }
.ramp { height: 72px; display: flex; padding-left: 59px; }
.ramp > i { width: 13px; height: 36px; background: linear-gradient(#f5f5f5, #000); }
.ramp > div { margin: -2px 0 0 5px; display: flex; flex-direction: column; gap: 20px; white-space: nowrap; letter-spacing: 0; }

.view { width: 1138px; height: 648px; background: #f0f0f0; border-top: 1px solid #808080; border-left: 1px solid #696969; flex: none; }
.canvas-row { height: 630px; display: flex; border-bottom: 2px solid #fff; }
.map { width: 1120px; height: 628px; background: #f57c00; border-top: 1px solid #8b6540; }
.contour { fill: none; stroke: #43ab00; }
.contour path { vector-effect: non-scaling-stroke; stroke-width: 1px; shape-rendering: crispEdges; }
.labels { font: 9.500px "Liberation Sans", Arial, sans-serif; letter-spacing: 0; }
.vscroll { width: 15px; margin-left: 1px; display: flex; flex-direction: column; align-items: center; padding: 7px 0 4px; }
.vscroll svg { width: 9px; height: 6px; }
.vscroll i { width: 14px; height: 17px; background: #cdcdcd; margin: 237px 0 auto 1px; }
.hscroll { height: 17px; display: flex; align-items: flex-start; border-bottom: 1px solid #fff; }
.viewtab { width: 15px; height: 11px; display: flex; align-items: center; justify-content: center; }
.viewtab.on { width: 16px; background: #cce8ff; outline: 1px solid #99d1ff; outline-offset: -1px; }
.viewtab svg { width: 9px; height: 9px; }
.hscroll > i { width: 1px; height: 10px; background: #888; margin-left: 2px; }
.refresh { margin-left: 4px; }
.hl { width: 6px; height: 8px; margin: 3px 0 0 14px; }
.hscroll em { width: 29px; height: 14px; background: #cdcdcd; margin-left: 580px; }
.hr { width: 6px; height: 8px; margin: 3px 0 0 412px; }
.dock { width: 24px; flex: none; padding: 2px 0 0 4px; background: #fcfcfc; }
.tab { width: 20px; background: #f0f0f0; border: 1px solid #8e8e8e; border-right: 0; border-radius: 4px 0 0 4px; display: flex; flex-direction: column; align-items: center; padding: 3px 1px 0 0; color: #5c5c5c; }
.tab svg { width: 16px; height: 16px; }
.tab span { writing-mode: vertical-rl; font: 12px/16px Roboto, sans-serif; letter-spacing: .25px; margin-top: 5px; white-space: nowrap; }
.t1 { height: 71px; } .t2 { height: 68px; margin-bottom: 13px; } .t3 { height: 117px; margin-bottom: 13px; } .t4 { height: 90px; }
.status { height: 18px; flex: none; background: #f0f0f0; padding: 3px 0 0 1113px; white-space: nowrap; letter-spacing: -.23px; }
.edge { height: 2px; flex: none; background: #64282e; padding-left: 978px; }
.edge i { width: 124px; height: 2px; background: #a31b28; }

.identify { position: absolute; left: 778px; top: 160px; width: 380px; height: 560px; background: #f0f0f0; border: 1px solid #fff; border-right: 1px solid #000; border-bottom: 1px solid #000; padding: 3px 2px 0 2px; display: flex; flex-direction: column; font-size: 10.900px; letter-spacing: -.15px; white-space: nowrap; box-shadow: inset -1px -1px #999; }
.id-title { height: 19px; background: linear-gradient(90deg, #99b4d1, #b9d1ea); display: flex; justify-content: space-between; padding: 2px 3px 0 4px; font-size: 11.500px; }
.id-title svg { width: 28px; height: 12px; margin-top: 1px; }
.from { height: 34px; display: flex; padding: 10px 2px 0 4px; }
.from > span { width: 89px; padding-top: 1px; }
.select { width: 279px; height: 19px; display: flex; align-items: center; background: #fff; border: 1px solid #a0a0a0; border-top: 2px solid #777; border-left: 2px solid #777; font-size: 11.500px; flex: none; }
.select svg { width: 17px; height: 15px; }
.select span { flex: 1; margin-left: 3px; letter-spacing: 0; }
.select b { width: 16px; height: 16px; background: #f0f0f0; border: 1px solid; border-color: #fff #777 #777 #fff; }
.select b::after { content: ""; display: block; margin: 5px 3px; border: 4px solid transparent; border-top-color: #000; border-bottom: 0; }
.results { height: 101px; background: #fff; border: solid #919191; border-width: 1px 0 0 1px; padding-left: 8px; }
.results > div { height: 16px; display: flex; align-items: center; }
.results .exp { margin: 1px 0 0; }
.results u { width: 5px; border-top: 1px dotted #888; margin-right: 1px; }
.results .child u { width: 9px; height: 9px; margin: -8px 0 0 23px; border: dotted #888; border-width: 0 0 1px 1px; }
.child span { background: #f0f0f0; padding: 0 2px; margin-left: 1px; }
.splitter { height: 13px; display: flex; align-items: center; }
.splitter i { width: 124px; height: 1px; background: #999; margin-left: 124px; margin-right: 102px; }
.splitter svg { width: 23px; height: 11px; }
.location { height: 30px; display: flex; padding: 6px 0 0 7px; border: solid #919191; border-width: 1px 0 0 1px; }
.location > span { width: 64px; }
.location > div { width: 288px; height: 17px; border: 1px solid #828282; padding: 0 0 0 5px; line-height: 14px; letter-spacing: -.25px; }
.location b { margin: 0 0 0 4px; width: 6px; height: 6px; background: #ccc; }
.location b::after { content: ""; display: block; margin: 2px 1px; border: 2px solid transparent; border-top-color: #111; border-bottom: 0; }
.table { height: 332px; width: 372px; background: #fff; border: 1px solid #828790; padding: 1px 1px 0 1px; margin-left: 1px; overflow: hidden; }
.table > div { height: 17px; display: flex; border-bottom: 1px solid #eee; line-height: 17px; }
.table > div > span:first-child { width: 85px; height: 17px; padding-left: 5px; border-right: 1px solid #eee; margin-right: 5px; }
.table .head { height: 24px; border: 0; line-height: 24px; }
.table .head > span:first-child { height: 24px; border-color: #ddd; }
.table .last { border: 0; }
.id-status { height: 25px; display: flex; padding: 4px 0 0 2px; border-top: 1px solid #ccc; margin-top: 1px; font-size: 11.300px; letter-spacing: -.05px; }
.id-status span { width: 281px; }
.id-status i { width: 91px; height: 20px; border: solid #ccc; border-width: 0 1px; margin-top: -2px; }
```
